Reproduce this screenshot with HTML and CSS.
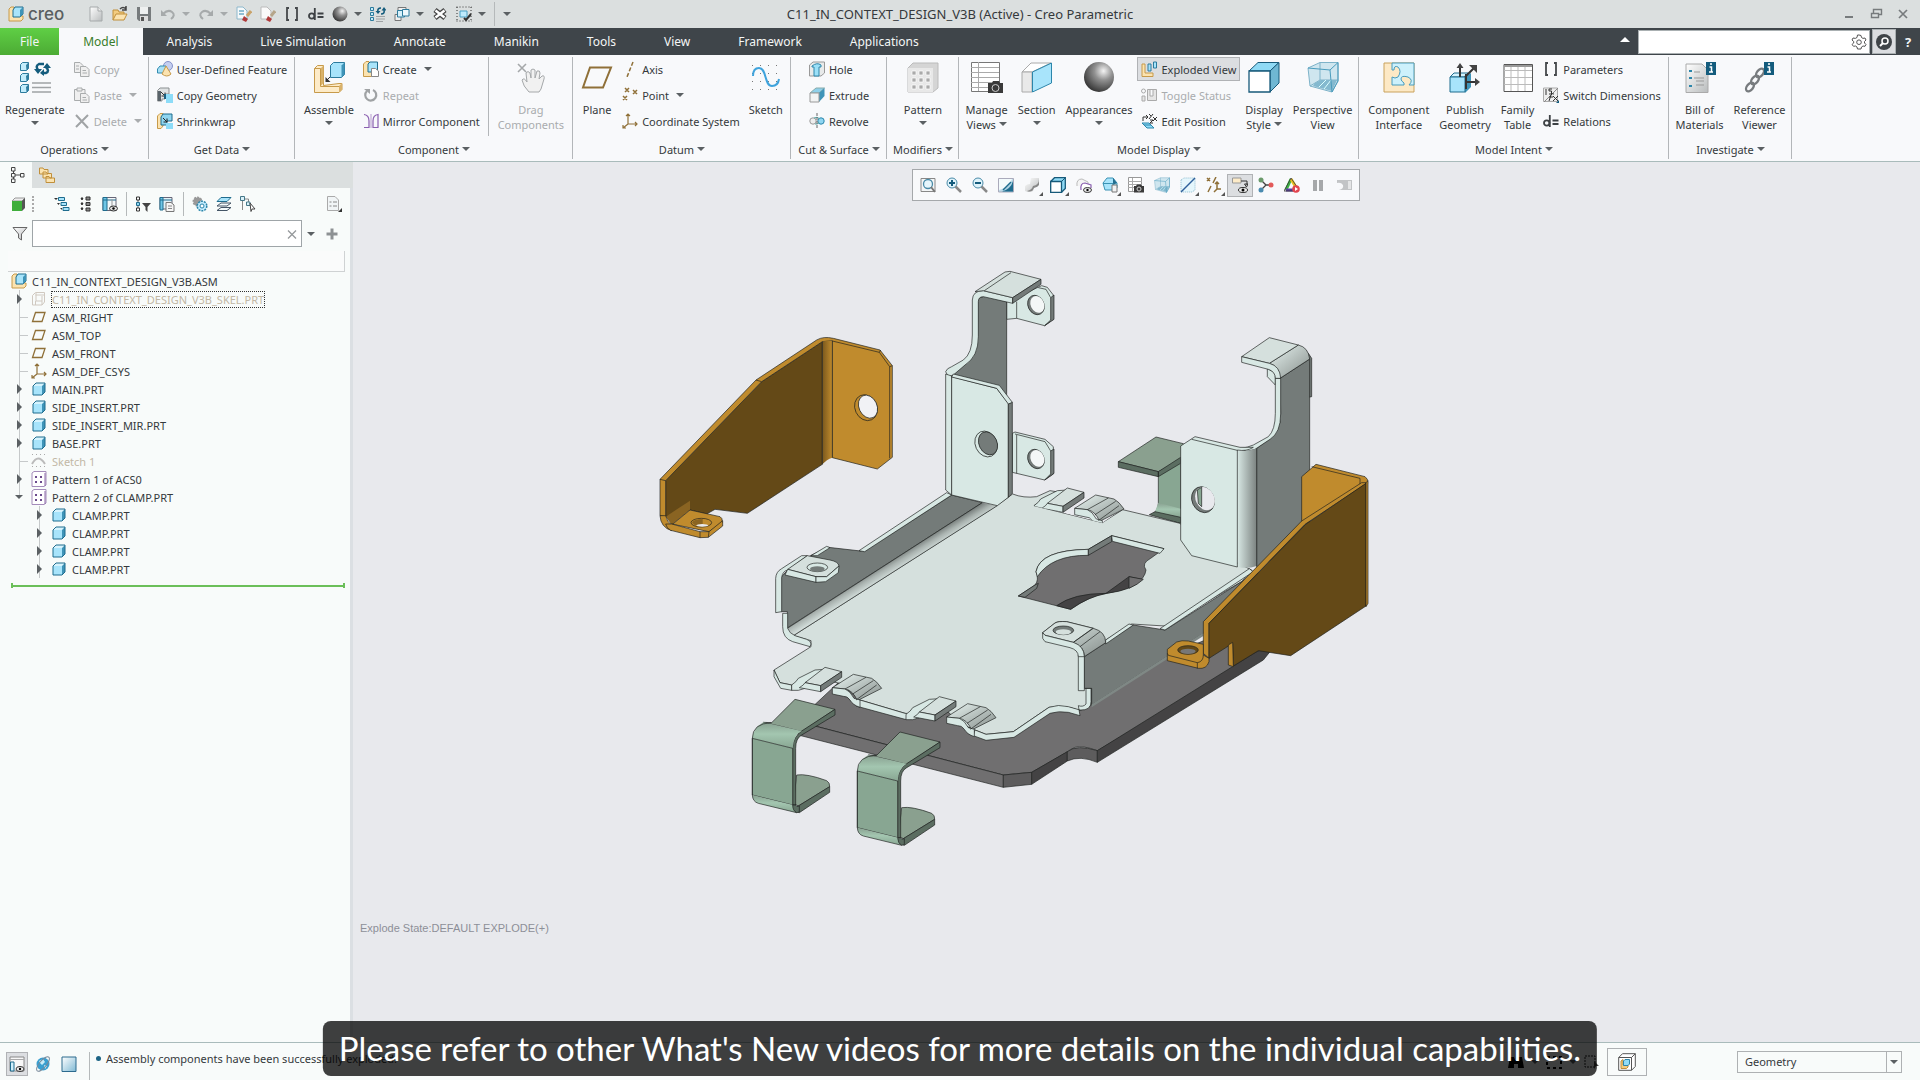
FILE: index.html
```html
<!DOCTYPE html>
<html lang="en">
<head>
<meta charset="utf-8">
<title>C11_IN_CONTEXT_DESIGN_V3B (Active) - Creo Parametric</title>
<link rel="stylesheet" href="styles.css">
</head>
<body>
<svg class="defs" aria-hidden="true">
<defs>
<linearGradient id="gGray" x1="0" y1="0" x2="1" y2="1"><stop offset="0" stop-color="#fff"/><stop offset="1" stop-color="#b9bcbd"/></linearGradient>
<linearGradient id="gBlue" x1="0" y1="0" x2="1" y2="1"><stop offset="0" stop-color="#fff"/><stop offset="1" stop-color="#7fb9d4"/></linearGradient>
<radialGradient id="gBall" cx=".65" cy=".3" r=".75"><stop offset="0" stop-color="#f4f4f4"/><stop offset=".4" stop-color="#929292"/><stop offset="1" stop-color="#333"/></radialGradient>
<symbol id="cube" viewBox="0 0 16 16"><path d="M2 5L5 2H14L11 5Z" fill="#d6f3fd"/><path d="M11 5L14 2V11L11 14Z" fill="#3f94b8"/><path d="M2 5H11V14H2Z" fill="#a8e4fb"/><path d="M2 5L5 2H14V11L11 14H2Z" fill="none" stroke="#1f6c8e"/></symbol>
<symbol id="asm" viewBox="0 0 16 16"><path d="M1 3L3 1H6V10H15V13L13 15H1Z" fill="#fbe3b0" stroke="#c79a4a"/><path d="M5 4L7 1H15V8L12 11H5Z" fill="#a8e4fb" stroke="#1f6c8e"/><path d="M12 4L15 1V8L12 11Z" fill="#3f94b8"/></symbol>
<symbol id="new" viewBox="0 0 16 16"><path d="M2 1H10L14 5V15H2Z" fill="url(#gGray)" stroke="#a5a9aa"/><path d="M10 1V5H14" fill="#eee" stroke="#a5a9aa"/></symbol>
<symbol id="open" viewBox="0 0 16 16"><path d="M1 14V4H6L7 6H12V8" fill="#f3cc80" stroke="#c08f3a"/><path d="M1 14L4 8H15L12 14Z" fill="#fbe3b0" stroke="#c08f3a"/><path d="M8 3Q11 0 14 3M14 0V4H10" fill="none" stroke="#444" stroke-width="1.5"/></symbol>
<symbol id="save" viewBox="0 0 16 16"><path d="M1 1H15V15H3L1 13Z" fill="#777b7d"/><path d="M4 1H12V8H4Z" fill="#eef0f0"/><path d="M4 10H12V15H4Z" fill="#ddd"/><path d="M5 11H8V15H5Z" fill="#555"/></symbol>
<symbol id="undo" viewBox="0 0 16 16"><path d="M3 8Q8 3 12 6T11 13" fill="none" stroke="#a6aaab" stroke-width="2"/><path d="M1 4V10H7Z" fill="#a6aaab"/></symbol>
<symbol id="redo" viewBox="0 0 16 16"><path d="M13 8Q8 3 4 6T5 13" fill="none" stroke="#a6aaab" stroke-width="2"/><path d="M15 4V10H9Z" fill="#a6aaab"/></symbol>
<symbol id="docerase" viewBox="0 0 16 16"><path d="M1 1H7L11 5V13H1Z" fill="#f6f9fa" stroke="#8db8cc"/><path d="M3 5H8M3 8H8" stroke="#2a86ad"/><path d="M15 5L11 10" stroke="#c9a36a" stroke-width="3"/><path d="M8 10L12 13L10 16L6 14Z" fill="#b03a3a"/></symbol>
<symbol id="docclear" viewBox="0 0 16 16"><path d="M1 1H7L11 5V13H1Z" fill="#fafafa" stroke="#bbb"/><path d="M15 5L11 10" stroke="#b5a58a" stroke-width="3"/><path d="M8 10L12 13L10 16L6 14Z" fill="#b03a3a"/></symbol>
<symbol id="params" viewBox="0 0 16 16"><path d="M5 2H3V14H5M11 2H13V14H11" fill="none" stroke="#45494c" stroke-width="1.800"/></symbol>
<symbol id="deq" viewBox="0 0 16 16"><circle cx="3.7" cy="10" r="2.7" fill="none" stroke="#3d4144" stroke-width="1.8"/><path d="M6.8 2V14M9.500 7.500H15.500M9.500 11H15.500" stroke="#3d4144" stroke-width="1.8"/></symbol>
<symbol id="ball" viewBox="0 0 16 16"><circle cx="8" cy="8" r="7.500" fill="url(#gBall)"/></symbol>
<symbol id="regen" viewBox="0 0 32 32"><g fill="#c3ecfb" stroke="#2c7b9d"><path d="M1.500 3.500L3.500 1.500H9.500V7.500L7.500 9.500H1.500ZM1.500 14.500L3.500 12.500H9.500V18.500L7.500 20.500H1.500ZM1.500 25.500L3.500 23.500H9.500V29.500L7.500 31.500H1.500Z"/></g><path d="M7 4L9.500 1.500V7.500L7.500 9.500ZM7 15L9.500 12.500V18.500L7.500 20.500ZM7 26L9.500 23.500V29.500L7.500 31.500Z" fill="#2f7d9e"/><path d="M19 9Q16 5 20 3H25M27 6Q31 10 27 12H23" fill="none" stroke="#145c7d" stroke-width="2.500"/><path d="M15 8H23L19 13ZM24 7H32L28 2ZM21 12L25 8V15Z" fill="#145c7d"/><path d="M13 22H32M13 26.500H32M13 31H32" stroke="#9fa3a5" stroke-width="1.600"/></symbol>
<symbol id="regen16" viewBox="0 0 16 16"><path d="M.5 1.500H3.500V4.500H.5ZM.5 6.500H3.500V9.500H.5ZM.5 11.500H3.500V14.500H.5Z" fill="#c3ecfb" stroke="#2c7b9d"/><path d="M8 6Q7 2 11 2M14 4Q15 8 11 8" fill="none" stroke="#145c7d" stroke-width="1.600"/><path d="M5.500 5H10.500L8 8ZM11.500 4.500H16.500L14 1Z" fill="#145c7d"/><path d="M6 10.500H15M6 13H15M6 15.500H13" stroke="#9fa3a5"/></symbol>
<symbol id="wins" viewBox="0 0 16 16"><path d="M4 1.500H12V7.500H4ZM1 8.500H7V14.500H1Z" fill="#eee" stroke="#777"/><path d="M3.500 4.500H10.500V11H3.500Z" fill="#d6f0fa" stroke="#2c7b9d"/><path d="M8.500 3.500H15V10H8.500Z" fill="#eef8fc" stroke="#2c7b9d"/></symbol>
<symbol id="closex" viewBox="0 0 16 16"><path d="M3 4L13 12M13 4L3 12" stroke="#444" stroke-width="5"/><path d="M3.500 4.500L12.500 11.500M12.500 4.500L3.500 11.500" stroke="#fff" stroke-width="2.500"/></symbol>
<symbol id="selbox" viewBox="0 0 16 16"><path d="M.5 1H16M.5 15H16M1 1V16M15 1V16" stroke="#333" stroke-dasharray="1 2"/><path d="M4 5H11V11H4Z" fill="#bfeafc" stroke="#4aa0c4"/><path d="M8 12L10 14L15 8" fill="none" stroke="#333" stroke-width="2"/></symbol>
<symbol id="copy" viewBox="0 0 16 16"><g fill="#efefef" stroke="#a9acad"><path d="M.5 1.500H6L9 4.500V11.500H.5Z"/><path d="M6.500 5.500H12L15 8.500V15.500H6.500Z"/></g><path d="M2 5H5M2 8H5M8.500 9.500H12M8.500 12H13" stroke="#a9acad"/></symbol>
<symbol id="paste" viewBox="0 0 16 16"><g fill="#efefef" stroke="#a9acad"><path d="M.5 2.500H11V13.500H.5Z"/><path d="M3 1H8V4H3Z"/><path d="M6.500 6.500H12L15 9.500V15.500H6.500Z"/></g><path d="M8.500 10.500H12M8.500 13H13" stroke="#a9acad"/></symbol>
<symbol id="del" viewBox="0 0 16 16"><path d="M2 2L14 15M14 2L2 14" stroke="#a0a3a5" stroke-width="2"/></symbol>
<symbol id="udf" viewBox="0 0 16 16"><circle cx="11" cy="5" r="4.500" fill="#c5cff0" stroke="#8592c8"/><path d="M.5 8L3 5H9L7 12H.5Z" fill="#a9e0f5" stroke="#338cb0"/><path d="M9 5L14 13Q10 17 5 13Z" fill="#fbe3b0" stroke="#c79a4a"/></symbol>
<symbol id="copygeo" viewBox="0 0 16 16"><path d="M.5 3.500L3 1H12V7H8V12H5V14H.5Z" fill="#dfe2e3" stroke="#8b8f91"/><path d="M1 4V14H4V4Z" fill="#59636a"/><path d="M4 5L8 9M8 5.500V9H4.500" stroke="#333" fill="none"/><path d="M9 7H16V16H9Z" fill="#8ddcf8"/><path d="M8 7V12" stroke="#1b5f80" stroke-width="2"/></symbol>
<symbol id="shrink" viewBox="0 0 16 16"><path d="M.5 3L3 .5H6V13L4 15.500H.5Z" fill="#fbe3b0" stroke="#c79a4a"/><path d="M4 4L6 1H15V8H10V12H4Z" fill="#8fd5ef" stroke="#1f6c8e"/><path d="M6 5L10 9M10 5.500V9H6.500" stroke="#222" fill="none"/><path d="M9 10H16V16H9Z" fill="#8ddcf8"/></symbol>
<symbol id="assemble" viewBox="0 0 32 32"><path d="M1.500 7.500L4.500 4.500H10.500V24.500L26 22.500H29V28.500L26 31.500H1.500Z" fill="#fdebc8" stroke="#c79a4a"/><path d="M7.500 7.500L10.500 4.500V22L7.500 25ZM26 25L29 22V28.500L26 31.500Z" fill="#d9b26a"/><path d="M7.500 25.500H26M1.500 7.500H7.500V25.500" stroke="#c79a4a" fill="none"/><path d="M17.500 4.500L20.500 1.500H31.500V13.500L28.500 16.500H17.500Z" fill="#a8e4fb" stroke="#2c7b9d"/><path d="M28.500 4.500L31.500 1.500V13.500L28.500 16.500Z" fill="#3f94b8"/><path d="M17 16L13 20" stroke="#333"/><path d="M12.500 16V21H17.500Z" fill="#333"/></symbol>
<symbol id="create" viewBox="0 0 16 16"><path d="M.5 3L3 .5H6V10H12V15.500H.5Z" fill="#fbe3b0" stroke="#c79a4a"/><path d="M5 3L7 1H14.500V9L12 11H5Z" fill="#a8e4fb" stroke="#1f6c8e"/><path d="M8.500 7.500H12.500L15.500 10V15.500H8.500Z" fill="#fff" stroke="#888"/></symbol>
<symbol id="repeat" viewBox="0 0 16 16"><path d="M10 3A5.500 5.500 0 1 1 4 4" fill="none" stroke="#9fa2a4" stroke-width="2.200"/><path d="M1 2H7V7Z" fill="#9fa2a4"/></symbol>
<symbol id="mirror" viewBox="0 0 16 16"><path d="M1 1.500Q6 2 6 8V14.500H1M15 1.500Q10 2 10 8V14.500H15Z" fill="none" stroke="#8a5fb0" stroke-width="1.200"/><path d="M8 1V15" stroke="#8a5fb0" stroke-width=".6"/></symbol>
<symbol id="hand" viewBox="0 0 32 32"><path d="M3 3L11 11M11 3L3 11" stroke="#a5a8aa" stroke-width="1.600"/><path d="M14 31Q8 25 7 19Q9 16 12 21L11 12Q13 9 15 12L16 17V9Q18 7 20 9V17L22 10Q25 9 25 12L24 18L27 15Q30 14 29 18L26 28L24 31Z" fill="#f1f1f1" stroke="#a5a8aa"/></symbol>
<symbol id="plane" viewBox="0 0 32 32"><path d="M9 6.500H30L22 26.500H2Z" fill="none" stroke="#8f7038" stroke-width="2"/></symbol>
<symbol id="plane16" viewBox="0 0 16 16"><path d="M4.500 3.500H14L11 12.500H1.500Z" fill="none" stroke="#8f7038" stroke-width="1.300"/></symbol>
<symbol id="axis" viewBox="0 0 16 16"><path d="M11 1L5 16" stroke="#8f7038" stroke-width="1.500" stroke-dasharray="4 2"/></symbol>
<symbol id="point" viewBox="0 0 16 16"><path d="M3 1L7 5M7 1L3 5M11 3L15 7M15 3L11 7M1 9L5 13M5 9L1 13" stroke="#8f7038" stroke-width="1.500"/></symbol>
<symbol id="csys" viewBox="0 0 16 16"><path d="M6 1V11H15M6 11L1 15M4 3L6 1L8 3M13 9L15 11L13 13M1 12V15H4" fill="none" stroke="#8f7038" stroke-width="1.200"/></symbol>
<symbol id="sketch" viewBox="0 0 32 32"><path d="M2 4.500H30M2 12.500H30M2 20.500H30M2 28.500H30" stroke="#777" stroke-dasharray="1 7"/><path d="M3 15Q3 7 9 7C17 7 14 25 22 25Q28 25 29 18" fill="none" stroke="#3fa3dc" stroke-width="2"/></symbol>
<symbol id="hole" viewBox="0 0 16 16"><path d="M.5 4L4 1H15.500V12L12 15H.5Z" fill="#e8eaea" stroke="#999"/><path d="M3 5Q8 1 12 4V6H10V15H5V6H3Z" fill="#9be0f8" stroke="#2c86ab"/></symbol>
<symbol id="extrude" viewBox="0 0 16 16"><path d="M1 6L7 1H15.500L10 6Z" fill="#8fd0ea" stroke="#8aa"/><path d="M10 6L15.500 1V9L10 15Z" fill="#3f94b8"/><path d="M1 6H10V15H1Z" fill="#f2f3f3" stroke="#999"/></symbol>
<symbol id="revolve" viewBox="0 0 16 16"><circle cx="4" cy="8" r="3.200" fill="#eee" stroke="#999"/><circle cx="12" cy="8" r="3.200" fill="#8fd6f2" stroke="#2c86ab"/><path d="M5 5Q8 3 11 6M6 11Q9 12 10 9" fill="none" stroke="#5aa"/><path d="M8 0V16" stroke="#666" stroke-dasharray="3 1"/></symbol>
<symbol id="pattern" viewBox="0 0 32 32"><path d="M1 7L6 2H31V27L26 31H1Z" fill="#d5d5d5" stroke="#bbb"/><path d="M1 7H26V31H1Z" fill="#e8e8e8"/><path d="M5 10H9V14H5ZM12 10H16V14H12ZM19 10H23V14H19ZM5 17H9V21H5ZM12 17H16V21H12ZM19 17H23V21H19ZM5 24H9V28H5ZM12 24H16V28H12ZM19 24H23V28H19Z" fill="#aaa" stroke="#fff" stroke-width=".7"/></symbol>
<symbol id="manage" viewBox="0 0 32 32"><path d="M.5 1.500H28.500V30.500H.5Z" fill="#fff" stroke="#777"/><path d="M7.500 1V30M0 6.500H28M0 11.500H28M0 16.500H28M0 21.500H28M0 26.500H20" stroke="#aaa"/><path d="M17 22H21L22 20H28L29 22H32V32H17Z" fill="#3a3a3a"/><circle cx="24.500" cy="27" r="3.500" fill="#3a3a3a" stroke="#ccc"/></symbol>
<symbol id="manage16" viewBox="0 0 16 16"><path d="M.5 .5H13.500V14.500H.5Z" fill="#fff" stroke="#999"/><path d="M4.500 1V14M0 4.500H14M0 7.500H14M0 10.500H14" stroke="#aaa"/><path d="M6 9H8L9 7.500H13L14 9H16V15.500H6Z" fill="#3a3a3a"/><circle cx="11" cy="12" r="2" fill="#3a3a3a" stroke="#ccc"/></symbol>
<symbol id="section" viewBox="0 0 32 32"><path d="M1 11L10 2H30L11 11Z" fill="#fff" stroke="#aaa"/><path d="M1 11H11V31H1Z" fill="#e9e9e9" stroke="#aaa"/><path d="M11.500 11L30.500 2V22L11.500 31Z" fill="#a8e4fb" stroke="#2c86ab"/></symbol>
<symbol id="exploded" viewBox="0 0 16 16"><path d="M1 3H4V12H12V15.500H1Z" fill="#fbe3b0" stroke="#c79a4a"/><path d="M7 3H10V10H7ZM12.500 1H15.500V7H12.500Z" fill="#a8e4fb" stroke="#2c7b9d"/></symbol>
<symbol id="toggle" viewBox="0 0 16 16"><circle cx="2.500" cy="4" r="2" fill="none" stroke="#aaa"/><path d="M1 9H4V14H1ZM6.500 2.500H15.500V13.500H6.500ZM9 3V9H12V3" fill="#e5e5e5" stroke="#aaa"/></symbol>
<symbol id="editpos" viewBox="0 0 16 16"><path d="M2 8V4H6M5 2L7 4L5 6M8 1L10 3M12 1L8 6M12 4L16 8M16 4L12 8M9 7H12L9 10H12" stroke="#333" fill="none"/><path d="M1 10H8L13 15H6Z" fill="#8fdcf8" stroke="#2c86ab"/><path d="M3 12H10" stroke="#2c86ab"/></symbol>
<symbol id="dstyle" viewBox="0 0 32 32"><path d="M1 10L10 1.500H31L22 10Z" fill="#8fdaf5" stroke="#175a7a"/><path d="M22 10L31 1.500V22L22 31Z" fill="#6fb7d3" stroke="#175a7a"/><path d="M1 10H22V31H1Z" fill="#fff" stroke="#175a7a" stroke-width="1.300"/></symbol>
<symbol id="dstyle16" viewBox="0 0 16 16"><path d="M.7 4.500L4.500 .7H15.300V11.500L11.500 15.300H.7Z" fill="#8fdaf5" stroke="#175a7a" stroke-width="1.300"/><path d="M.7 4.500H11.500V15.300H.7Z" fill="#fff" stroke="#175a7a" stroke-width="1.300"/><path d="M11.500 4.500L15.300 .7" stroke="#175a7a"/></symbol>
<symbol id="persp" viewBox="0 0 32 32"><path d="M1 7L13 1.500H31V20L25 31L3 25Z" fill="#cfe6ef" stroke="#7eb3c9"/><path d="M13 1.500V19L3 25M13 19H31" fill="none" stroke="#7eb3c9"/><path d="M8 22L14 19H30L25 30L6 25Z" fill="#84b9cf"/><path d="M12 26L19 19M17 28L24 19" stroke="#dff"/><path d="M1 7L23 9L25 31M23 9L31 1.500V20L25 31" fill="none" stroke="#4a9cbd"/></symbol>
<symbol id="puzzle" viewBox="0 0 32 32"><path d="M1 2H31V31H1Z" fill="#fde9c5" stroke="#c9a25c"/><path d="M9 2H31V24H26Q31 19 25 16Q18 14 18 18Q18 20 21 22V24H9V16Q12 18 15 16Q19 10 15 6Q11 4 11 9L9 9Z" fill="#cdf1fc" stroke="#4a9cbd"/></symbol>
<symbol id="publish" viewBox="0 0 32 32"><path d="M1 16L5 12H19L16 16Z" fill="#d6f3fd" stroke="#1f6c8e"/><path d="M16 16L22 12V26L16 32Z" fill="#3f94b8"/><path d="M1 16H16V31H1Z" fill="#a8e4fb" stroke="#1f6c8e"/><path d="M11 16V4M16 16L25 7M16 21H29M17 13V28" stroke="#333" stroke-width="2"/><path d="M7.500 7L11 2L14.500 7ZM20 4H28V12ZM26 17L31 21L26 25Z" fill="#444"/></symbol>
<symbol id="ftable" viewBox="0 0 32 32"><path d="M2 3.500H30.500V30.500H2Z" fill="#fff" stroke="#555"/><path d="M2 5H30" stroke="#999" stroke-width="2"/><path d="M2 9.500H30M9 6V30M16 6V30M23 6V30M2 16.500H30M2 23.500H30" stroke="#bbb"/></symbol>
<symbol id="switchd" viewBox="0 0 16 16"><path d="M.5 1H14.500V14.500H.5Z" fill="#eee" stroke="#aaa"/><path d="M1 15L15 1" stroke="#888"/><path d="M3 2V8M9 2H6V4H8.500V7H6M6 14L8 8Q9 6 11 7M6 10H10M10 9L15 14M15 9L10 14" fill="none" stroke="#333"/><path d="M13 16H16V13Z" fill="#145c7d"/></symbol>
<symbol id="bom" viewBox="0 0 32 32"><path d="M2 3H18L24 9V31.500H2Z" fill="url(#gGray)" stroke="#aaa"/><path d="M10 11H16M10 17H20M12 20H20M12 24H20" stroke="#999"/><path d="M5 9H8V11H5ZM5 16H8V18H5ZM5 24H8V26H5Z" fill="#2c86ab"/><path d="M22 1H32V14H22Z" fill="#145c7d"/><path d="M25.500 6H27.500V11H29M25 11H29M26 3H28" stroke="#fff" stroke-width="1.500" fill="none"/></symbol>
<symbol id="refv" viewBox="0 0 32 32"><g fill="none" stroke="#777b7e" stroke-width="2.400"><ellipse cx="7" cy="26" rx="5" ry="3" transform="rotate(-50 7 26)"/><ellipse cx="12" cy="19" rx="5" ry="3" transform="rotate(-50 12 19)"/><ellipse cx="17" cy="12" rx="5" ry="3" transform="rotate(-50 17 12)"/></g><path d="M21 1H31V14H21Z" fill="#145c7d"/><path d="M24.500 6H26.500V11H28M24 11H28M25 3H27" stroke="#fff" stroke-width="1.500" fill="none"/></symbol>
<symbol id="tree" viewBox="0 0 16 16"><path d="M3.500 2V14M3.500 8H12" stroke="#444"/><path d="M1.500 .5H5V4H1.500ZM1.500 6.500H5V10H1.500ZM1.500 12H5V15.500H1.500ZM10.500 6.500H14V10H10.500Z" fill="#f8fbfa" stroke="#444"/></symbol>
<symbol id="folders" viewBox="0 0 16 16"><path d="M.5 1H4L5 2.500H9V7H.5ZM4 5H7L8 6.500H12.500V11H4ZM7 9.500H10L11 11H15.500V15.500H7Z" fill="#fbe3b0" stroke="#c08f3a"/></symbol>
<symbol id="greencube" viewBox="0 0 16 16"><path d="M2 5L5 2H15L12 5Z" fill="#eee" stroke="#999"/><path d="M12 5L15 2V12L12 15Z" fill="#555"/><path d="M2 5H12V15H2Z" fill="#3fae3b"/></symbol>
<symbol id="t1" viewBox="0 0 16 16"><path d="M0 2H4L2 4ZM3 7H6L4.500 9ZM6 12H8V14Z" fill="#333"/><path d="M4.500 1.500H10.500V4.500H4.500ZM7 6.500H12.500V9.500H7ZM9 11.500H15V14.500H9Z" fill="#a8e4fb" stroke="#1f6c8e"/></symbol>
<symbol id="t2" viewBox="0 0 16 16"><path d="M3 2H5L4 4ZM3 7H5L4 9ZM3 12H5L4 14Z" stroke="#333"/><path d="M8 1H12V4H8ZM8 6.500H12V9.500H8ZM8 12H12V15H8Z" fill="#888" stroke="#333"/></symbol>
<symbol id="t3" viewBox="0 0 16 16"><path d="M1 1.500H14V14.500H1Z" fill="#f4f8fa" stroke="#667"/><path d="M1 1.500H5V14.500H1Z" fill="#6fc6e6" stroke="#1f6c8e"/><path d="M1 4H14" stroke="#1f6c8e"/><path d="M10 3V14" stroke="#999"/><ellipse cx="11.500" cy="12.500" rx="4" ry="2.500" fill="#ddd" stroke="#333"/><circle cx="11.500" cy="12.500" r="1.200"/></symbol>
<symbol id="t4" viewBox="0 0 16 16"><path d="M3 1V15" stroke="#666"/><path d="M1.500 1H4.500V4H1.500ZM1.500 12H4.500V15H1.500Z" fill="#fff" stroke="#333"/><path d="M1.500 6.500H4.500V9.500H1.500Z" fill="#8fd5ef" stroke="#1f6c8e"/><path d="M7 7H16L12.500 11V16L10.500 14V11Z" fill="#444"/></symbol>
<symbol id="t5" viewBox="0 0 16 16"><path d="M1 1.500H13V13H1Z" fill="#e4f2f8" stroke="#667"/><path d="M1 1.500H4V14H1Z" fill="#6fc6e6" stroke="#1f6c8e"/><path d="M1 4H13" stroke="#1f6c8e"/><path d="M7 6.500H12L15 9V15.500H7Z" fill="#f6f6f6" stroke="#777"/><path d="M9 10H13M9 12.500H13" stroke="#888"/></symbol>
<symbol id="gears" viewBox="0 0 16 16"><circle cx="5.500" cy="5.500" r="4" fill="#999" stroke="#999" stroke-width="2" stroke-dasharray="2 1"/><circle cx="10" cy="10" r="4.800" fill="#bfeafc" stroke="#2c86ab" stroke-width="1.500" stroke-dasharray="2 1"/><circle cx="10" cy="10" r="2" fill="#fff" stroke="#2c86ab"/></symbol>
<symbol id="layers" viewBox="0 0 16 16"><path d="M1 14.500L5 11.500H15L11 14.500ZM1 10L5 7H15L11 10Z" fill="#f4fbfd" stroke="#456"/><path d="M1 5.500L5 1.500H15L11 5.500Z" fill="#a8e4fb" stroke="#1f6c8e"/></symbol>
<symbol id="t8" viewBox="0 0 16 16"><path d="M2.500 5V14M4 3H8.500V6" stroke="#888" fill="none"/><path d="M.5 .5H4.500V4.500H.5ZM6.500 6H10V9.500H6.500Z" fill="#d8f0f8" stroke="#478"/><path d="M10 7L15 13L12 13L11 15.500Z" fill="#fff" stroke="#444"/></symbol>
<symbol id="setdoc" viewBox="0 0 16 16"><path d="M1.500 .5H9L12.500 4V14.500H1.500Z" fill="#f1f5f6" stroke="#aaa"/><path d="M3.500 6H5.500M7 6H11M3.500 10H5.500M7 10H11" stroke="#888"/><path d="M12 16H16V12Z" fill="#333"/></symbol>
<symbol id="funnel" viewBox="0 0 16 16"><path d="M1 1.500H15L9.500 8V14L6.500 12V8Z" fill="url(#gGray)" stroke="#666"/></symbol>
<symbol id="plus" viewBox="0 0 16 16"><path d="M8 2.500V13.500M2.500 8H13.500" stroke="#8d9193" stroke-width="3"/></symbol>
<symbol id="skel" viewBox="0 0 16 16"><path d="M1.500 4.500L4.500 1.500H13.500V11L11 14H1.500ZM4.500 4H13M5 2V10H11M11 5V14M4.500 10V14" fill="none" stroke="#d0c9c0"/></symbol>
<symbol id="sk1" viewBox="0 0 16 16"><path d="M1 1.500H15M1 13.500H15" stroke="#aaa" stroke-dasharray="1 3"/><path d="M1 11Q7 0 14 11" fill="none" stroke="#bbb" stroke-width="2"/></symbol>
<symbol id="patt16" viewBox="0 0 16 16"><path d="M1 2L3 .5H15V14L13 15.500H1Z" fill="#fff" stroke="#a48cba"/><path d="M14 2V15" stroke="#8c6aa8"/><path d="M4 5H6V7H4ZM9 5H11V7H9ZM4 10H6V12H4ZM9 10H11V12H9Z" fill="#6b4a8c"/></symbol>
<symbol id="zfit" viewBox="0 0 16 16"><path d="M1 1.500H15V14.500H1Z" fill="#f4f6f7" stroke="#888"/><circle cx="8" cy="7" r="4.500" fill="#e6f6fc" stroke="#4a8ba8" stroke-width="1.300"/><path d="M11 10L15 15" stroke="#777" stroke-width="2"/></symbol>
<symbol id="zin" viewBox="0 0 16 16"><circle cx="6" cy="6" r="5" fill="#dff3fb" stroke="#4a8ba8"/><path d="M6 3V9M3 6H9" stroke="#145c7d" stroke-width="2"/><path d="M9.500 9.500L15 15" stroke="#888" stroke-width="2.500"/></symbol>
<symbol id="zout" viewBox="0 0 16 16"><circle cx="6" cy="6" r="5" fill="#dff3fb" stroke="#4a8ba8"/><path d="M3 6H9" stroke="#145c7d" stroke-width="2"/><path d="M9.500 9.500L15 15" stroke="#888" stroke-width="2.500"/></symbol>
<symbol id="repaint" viewBox="0 0 16 16"><path d="M.5 1.500H15.500V15H.5Z" fill="url(#gBlue)" stroke="#aab"/><path d="M4 14.500Q13 12 15 4V14.500Z" fill="#1f6c8e"/><path d="M1 2H14Q12 10 1 13Z" fill="#f3fafc"/><path d="M5 13L13 5" stroke="#1f6c8e" stroke-width="1.500"/></symbol>
<symbol id="render" viewBox="0 0 16 16"><path d="M7 1H15V7Q14 9 10 10L9 14Q5 16 1 14V9Q3 7 6 7Z" fill="url(#gGray)"/><path d="M9 9Q15 8 15 2V8Q14 10 10 11Q8 16 3 14Q8 13 9 9Z" fill="#888"/></symbol>
<symbol id="hidden" viewBox="0 0 16 16"><path d="M1 9Q0 2 6 2L12 5V9" fill="#f4f4f4" stroke="#bbb"/><path d="M5 13Q4 6 9 6L15 8V11" fill="#fff" stroke="#8a5fb0" stroke-width="1.200"/><ellipse cx="11.500" cy="13" rx="4" ry="2.500" fill="#eee" stroke="#333"/><circle cx="11.500" cy="13" r="1.200"/></symbol>
<symbol id="named" viewBox="0 0 16 16"><path d="M1 6L5 1H11L15 6V11L11 13H3Z" fill="#a8e4fb" stroke="#3a92b4"/><path d="M11 1L15 6L11 8Z" fill="#236f90"/><path d="M1 6.500H11V13" stroke="#3a92b4" fill="none"/><path d="M10 8H15V15H10Z" fill="#f2f2f2" stroke="#777"/></symbol>
<symbol id="nodisp" viewBox="0 0 16 16"><path d="M1 3L4 1H15V13L12 15H1Z" fill="#e5f6fc" stroke="#8fbdd0" stroke-dasharray="1 1"/><path d="M1 15L15 1" stroke="#2f5f9a" stroke-width="1.500"/></symbol>
<symbol id="datums" viewBox="0 0 16 16"><path d="M1 1L4 4M4 1L1 4M10 0L7 6M5 9L2 15M11 5V12H15M11 12L8 15M9 7L11 5L13 7" fill="none" stroke="#8f7038" stroke-width="1.500"/></symbol>
<symbol id="annot" viewBox="0 0 16 16"><path d="M.5 1H9V6H.5Z" fill="#fdebc8" stroke="#999"/><path d="M9 4H15V8M12.500 7H16L14.500 10Z" stroke="#333" fill="none"/><ellipse cx="11" cy="13" rx="4.500" ry="2.500" fill="#eee" stroke="#333"/><circle cx="11" cy="13" r="1.500"/></symbol>
<symbol id="spin" viewBox="0 0 16 16"><path d="M3 3L8 8H13M8 8L3 13" stroke="#444" stroke-width="1.300" fill="none"/><circle cx="3" cy="3" r="2.500" fill="#6b9a6b"/><circle cx="13" cy="8" r="2.500" fill="#e35a5a"/><circle cx="3" cy="13" r="2.500" fill="#4a8bb0"/></symbol>
<symbol id="sim" viewBox="0 0 16 16"><path d="M7 2L2 13" stroke="#3cb043" stroke-width="3"/><path d="M7 2L13 12" stroke="#e8c020" stroke-width="3"/><path d="M2 13H11" stroke="#5a3fa0" stroke-width="3"/><path d="M7 1L0 14H9M7 1L13 10" stroke="#333" stroke-width=".8" fill="none"/><circle cx="12" cy="12" r="3.800" fill="#e2454f"/><path d="M11 10L14 12L11 14Z" fill="#fff"/></symbol>
<symbol id="pause" viewBox="0 0 16 16"><path d="M3 3H7V14H3ZM9 3H13V14H9Z" fill="#a6a8aa"/></symbol>
<symbol id="resume" viewBox="0 0 16 16"><path d="M1 3H16V13H3Q8 12 7 8Q5 5 1 6Z" fill="#c2c4c6"/><path d="M12 4H15V12H12Z" fill="#e4e5e6"/></symbol>
<symbol id="geo" viewBox="0 0 18 18"><path d="M.7 4.500L4.500 .7H17.300V13.500L13.500 17.300H.7ZM.7 4.500H13.500V17.300M13.500 4.500L17.300 .7" fill="#fff" stroke="#555"/><path d="M3 8L5 6.500V12H10V14L8.500 15.500H3Z" fill="#f3cc80" stroke="#c08f3a"/><path d="M5.500 8L7 6.500H11.500V11L10 12.500H5.500Z" fill="#8fdcf8" stroke="#2c86ab"/></symbol>
<symbol id="navtree" viewBox="0 0 16 16"><path d="M1 1H15V15H1Z" fill="#f8f8f8" stroke="#888"/><path d="M1 3.500H15" stroke="#aaa"/><path d="M1.500 6H5V15H1.500Z" fill="#cfeefa" stroke="#1f6c8e"/><ellipse cx="11" cy="13" rx="4" ry="2.500" fill="#eee" stroke="#333"/><circle cx="11" cy="13" r="1.200"/></symbol>
<symbol id="globe" viewBox="0 0 16 16"><circle cx="8" cy="8" r="6.500" fill="#3a9fd0"/><path d="M4 5L8 3L10 6L7 9L5 7ZM9 9L12 10L10 13Z" fill="#c8ecf8"/><ellipse cx="8" cy="8" rx="9" ry="3.500" fill="none" stroke="#789" transform="rotate(-50 8 8)"/></symbol>
<symbol id="sheet" viewBox="0 0 16 16"><path d="M1 1H15V15.500H1Z" fill="url(#gBlue)" stroke="#2c6a8e"/></symbol>
<symbol id="bino" viewBox="0 0 16 16"><path d="M2 3H6L7 6H9L10 3H14L16 14H10V10H6V14H0Z" fill="#000"/></symbol>
<symbol id="dashsel" viewBox="0 0 16 16"><path d="M1 3H15V14H1Z" fill="none" stroke="#000" stroke-width="2" stroke-dasharray="3 3"/></symbol>
<symbol id="picksel" viewBox="0 0 16 16"><path d="M1 2H11V13H1Z" fill="none" stroke="#222" stroke-dasharray="2 1"/><path d="M10 7L15 12L12 12L10 15Z" fill="#444"/></symbol>
<symbol id="gear" viewBox="0 0 16 16"><path d="M8 1L10 1.500L10.500 3.500L12 4.400L14 4L15 6L13.500 7.500V9L15 10.500L14 12.300L12 12L10.500 13L10 15H6.500L6 13L4.500 12L2.500 12.300L1 10.500L2.700 9V7.500L1 6L2 4L4.300 4.400L6 3.500L6.500 1Z" fill="#fff" stroke="#555"/><circle cx="8" cy="8.200" r="2.300" fill="none" stroke="#555"/></symbol>
<symbol id="mag" viewBox="0 0 16 16"><circle cx="8" cy="8" r="8" fill="#3f4448"/><circle cx="9" cy="7" r="3" fill="none" stroke="#fff" stroke-width="1.500"/><path d="M7 9L4 12" stroke="#fff" stroke-width="2"/></symbol>
<symbol id="min" viewBox="0 0 16 16"><path d="M4 11H12" stroke="#777b7d" stroke-width="2"/></symbol>
<symbol id="rest" viewBox="0 0 16 16"><path d="M5.500 7V3.500H13.500V8.500H11M3.500 7.500H10.500V11.500H3.500Z" fill="none" stroke="#777b7d" stroke-width="1.400"/></symbol>
<symbol id="x" viewBox="0 0 16 16"><path d="M4 4L12 12M12 4L4 12" stroke="#777b7d" stroke-width="1.700"/></symbol>
<symbol id="xthin" viewBox="0 0 16 16"><path d="M4 4.500L12 12.500M12 4.500L4 12.500" stroke="#95999b" stroke-width="1.300"/></symbol>
</defs>
</svg>

<div class="app">
<header class="titlebar">
  <div class="brand"><svg class="i"><use href="#asm"/></svg><span>creo</span></div>
  <nav class="quick" aria-label="Quick access">
    <button aria-label="New"><svg class="i"><use href="#new"/></svg></button>
    <button aria-label="Open"><svg class="i"><use href="#open"/></svg></button>
    <button aria-label="Save"><svg class="i"><use href="#save"/></svg></button>
    <button class="dd off" aria-label="Undo"><svg class="i"><use href="#undo"/></svg></button>
    <button class="dd off" aria-label="Redo"><svg class="i"><use href="#redo"/></svg></button>
    <button aria-label="Erase display"><svg class="i"><use href="#docerase"/></svg></button>
    <button aria-label="Clear"><svg class="i"><use href="#docclear"/></svg></button>
    <button aria-label="Parameters"><svg class="i"><use href="#params"/></svg></button>
    <button aria-label="Relations"><svg class="i"><use href="#deq"/></svg></button>
    <button class="dd" aria-label="Appearance"><svg class="i"><use href="#ball"/></svg></button>
    <button aria-label="Regenerate"><svg class="i"><use href="#regen16"/></svg></button>
    <button class="dd" aria-label="Windows"><svg class="i"><use href="#wins"/></svg></button>
    <button aria-label="Close window"><svg class="i"><use href="#closex"/></svg></button>
    <button class="dd" aria-label="Select"><svg class="i"><use href="#selbox"/></svg></button>
    <button class="more" aria-label="Customize"></button>
  </nav>
  <h1>C11_IN_CONTEXT_DESIGN_V3B (Active) - Creo Parametric</h1>
  <div class="winbtns">
    <button aria-label="Minimize"><svg class="i"><use href="#min"/></svg></button>
    <button aria-label="Restore"><svg class="i"><use href="#rest"/></svg></button>
    <button aria-label="Close"><svg class="i"><use href="#x"/></svg></button>
  </div>
</header>

<nav class="tabs">
  <button class="file">File</button><button class="on">Model</button><button>Analysis</button><button>Live Simulation</button><button>Annotate</button><button>Manikin</button><button>Tools</button><button>View</button><button>Framework</button><button>Applications</button>
  <div class="find">
    <button class="fold" aria-label="Minimize ribbon"></button>
    <div class="findbox"><input type="text" aria-label="Search commands"><svg class="i"><use href="#gear"/></svg></div>
    <button class="go" aria-label="Search"><svg class="i"><use href="#mag"/></svg></button>
    <button class="help" aria-label="Help">?</button>
  </div>
</nav>

<div class="ribbon">
  <section class="group w-ops"><div class="tools">
    <button class="big"><svg><use href="#regen"/></svg><span>Regenerate</span><i class="ar"></i></button>
    <div class="col">
      <button class="sm off"><svg class="i"><use href="#copy"/></svg>Copy</button>
      <button class="sm off"><svg class="i"><use href="#paste"/></svg>Paste<i class="ar"></i></button>
      <button class="sm off"><svg class="i"><use href="#del"/></svg>Delete<i class="ar"></i></button>
    </div></div><button class="cap">Operations<i class="ar"></i></button></section>
  <section class="group w-get"><div class="tools">
    <div class="col">
      <button class="sm"><svg class="i"><use href="#udf"/></svg>User-Defined Feature</button>
      <button class="sm"><svg class="i"><use href="#copygeo"/></svg>Copy Geometry</button>
      <button class="sm"><svg class="i"><use href="#shrink"/></svg>Shrinkwrap</button>
    </div></div><button class="cap">Get Data<i class="ar"></i></button></section>
  <section class="group w-comp"><div class="tools">
    <button class="big"><svg><use href="#assemble"/></svg><span>Assemble</span><i class="ar"></i></button>
    <div class="col">
      <button class="sm"><svg class="i"><use href="#create"/></svg>Create<i class="ar"></i></button>
      <button class="sm off"><svg class="i"><use href="#repeat"/></svg>Repeat</button>
      <button class="sm"><svg class="i"><use href="#mirror"/></svg>Mirror Component</button>
    </div>
    <div class="vsep"></div>
    <button class="big off"><svg><use href="#hand"/></svg><span>Drag<br>Components</span></button>
    </div><button class="cap">Component<i class="ar"></i></button></section>
  <section class="group w-datum"><div class="tools">
    <button class="big"><svg><use href="#plane"/></svg><span>Plane</span></button>
    <div class="col">
      <button class="sm"><svg class="i"><use href="#axis"/></svg>Axis</button>
      <button class="sm"><svg class="i"><use href="#point"/></svg>Point<i class="ar"></i></button>
      <button class="sm"><svg class="i"><use href="#csys"/></svg>Coordinate System</button>
    </div>
    <button class="big"><svg><use href="#sketch"/></svg><span>Sketch</span></button>
    </div><button class="cap">Datum<i class="ar"></i></button></section>
  <section class="group w-cut"><div class="tools">
    <div class="col">
      <button class="sm"><svg class="i"><use href="#hole"/></svg>Hole</button>
      <button class="sm"><svg class="i"><use href="#extrude"/></svg>Extrude</button>
      <button class="sm"><svg class="i"><use href="#revolve"/></svg>Revolve</button>
    </div></div><button class="cap">Cut &amp; Surface<i class="ar"></i></button></section>
  <section class="group w-mod"><div class="tools">
    <button class="big"><svg><use href="#pattern"/></svg><span>Pattern</span><i class="ar"></i></button>
    </div><button class="cap">Modifiers<i class="ar"></i></button></section>
  <section class="group w-disp"><div class="tools">
    <button class="big"><svg><use href="#manage"/></svg><span>Manage<br>Views<i class="ar in"></i></span></button>
    <button class="big"><svg><use href="#section"/></svg><span>Section</span><i class="ar"></i></button>
    <button class="big"><svg><use href="#ball"/></svg><span>Appearances</span><i class="ar"></i></button>
    <div class="col">
      <button class="sm pressed"><svg class="i"><use href="#exploded"/></svg>Exploded View</button>
      <button class="sm off"><svg class="i"><use href="#toggle"/></svg>Toggle Status</button>
      <button class="sm"><svg class="i"><use href="#editpos"/></svg>Edit Position</button>
    </div>
    <button class="big"><svg><use href="#dstyle"/></svg><span>Display<br>Style<i class="ar in"></i></span></button>
    <button class="big"><svg><use href="#persp"/></svg><span>Perspective<br>View</span></button>
    </div><button class="cap">Model Display<i class="ar"></i></button></section>
  <section class="group w-int"><div class="tools">
    <button class="big"><svg><use href="#puzzle"/></svg><span>Component<br>Interface</span></button>
    <button class="big"><svg><use href="#publish"/></svg><span>Publish<br>Geometry</span></button>
    <button class="big"><svg><use href="#ftable"/></svg><span>Family<br>Table</span></button>
    <div class="col">
      <button class="sm"><svg class="i"><use href="#params"/></svg>Parameters</button>
      <button class="sm"><svg class="i"><use href="#switchd"/></svg>Switch Dimensions</button>
      <button class="sm"><svg class="i"><use href="#deq"/></svg>Relations</button>
    </div></div><button class="cap">Model Intent<i class="ar"></i></button></section>
  <section class="group w-inv"><div class="tools">
    <button class="big"><svg><use href="#bom"/></svg><span>Bill of<br>Materials</span></button>
    <button class="big"><svg><use href="#refv"/></svg><span>Reference<br>Viewer</span></button>
    </div><button class="cap">Investigate<i class="ar"></i></button></section>
</div>

<main class="work">
<aside class="side">
  <div class="sidetabs"><button class="on" aria-label="Model tree"><svg class="i"><use href="#tree"/></svg></button><button aria-label="Folders"><svg class="i"><use href="#folders"/></svg></button></div>
  <div class="sidebody">
    <div class="sidetools">
      <button class="grip" aria-label="Active"><svg class="i"><use href="#greencube"/></svg></button>
      <button aria-label="Expand"><svg class="i"><use href="#t1"/></svg></button>
      <button aria-label="Collapse"><svg class="i"><use href="#t2"/></svg></button>
      <button aria-label="Columns"><svg class="i"><use href="#t3"/></svg></button>
      <span class="bar"></span>
      <button aria-label="Tree filters"><svg class="i"><use href="#t4"/></svg></button>
      <button aria-label="Tree columns"><svg class="i"><use href="#t5"/></svg></button>
      <span class="bar"></span>
      <button aria-label="Settings"><svg class="i"><use href="#gears"/></svg></button>
      <button aria-label="Layers"><svg class="i"><use href="#layers"/></svg></button>
      <button aria-label="Pick"><svg class="i"><use href="#t8"/></svg></button>
      <button class="last" aria-label="Save settings"><svg class="i"><use href="#setdoc"/></svg></button>
    </div>
    <div class="filter"><svg class="i"><use href="#funnel"/></svg><div class="fbox"><input type="text" aria-label="Filter tree"><svg class="i"><use href="#xthin"/></svg></div><i class="ar"></i><button aria-label="Add"><svg class="i"><use href="#plus"/></svg></button></div>
    <div class="colhead"></div>
    <ul class="tree">
      <li class="root"><svg class="i"><use href="#asm"/></svg>C11_IN_CONTEXT_DESIGN_V3B.ASM</li>
      <li class="n sub"><svg class="i"><use href="#skel"/></svg><span class="dim focus">C11_IN_CONTEXT_DESIGN_V3B_SKEL.PRT</span></li>
      <li class="n"><svg class="i"><use href="#plane16"/></svg>ASM_RIGHT</li>
      <li class="n"><svg class="i"><use href="#plane16"/></svg>ASM_TOP</li>
      <li class="n"><svg class="i"><use href="#plane16"/></svg>ASM_FRONT</li>
      <li class="n"><svg class="i"><use href="#csys"/></svg>ASM_DEF_CSYS</li>
      <li class="n sub"><svg class="i"><use href="#cube"/></svg>MAIN.PRT</li>
      <li class="n sub"><svg class="i"><use href="#cube"/></svg>SIDE_INSERT.PRT</li>
      <li class="n sub"><svg class="i"><use href="#cube"/></svg>SIDE_INSERT_MIR.PRT</li>
      <li class="n sub"><svg class="i"><use href="#cube"/></svg>BASE.PRT</li>
      <li class="n"><svg class="i"><use href="#sk1"/></svg><span class="dim">Sketch 1</span></li>
      <li class="n sub"><svg class="i"><use href="#patt16"/></svg>Pattern 1 of ACS0</li>
      <li class="n sub openn"><svg class="i"><use href="#patt16"/></svg>Pattern 2 of CLAMP.PRT</li>
      <li class="n sub deep"><svg class="i"><use href="#cube"/></svg>CLAMP.PRT</li>
      <li class="n sub deep"><svg class="i"><use href="#cube"/></svg>CLAMP.PRT</li>
      <li class="n sub deep"><svg class="i"><use href="#cube"/></svg>CLAMP.PRT</li>
      <li class="n sub deep"><svg class="i"><use href="#cube"/></svg>CLAMP.PRT</li>
    </ul>
    <div class="insert"></div>
  </div>
</aside>

<section class="canvas">
  <div class="viewbar">
    <button aria-label="Refit"><svg class="i"><use href="#zfit"/></svg></button>
    <button aria-label="Zoom in"><svg class="i"><use href="#zin"/></svg></button>
    <button aria-label="Zoom out"><svg class="i"><use href="#zout"/></svg></button>
    <button aria-label="Repaint"><svg class="i"><use href="#repaint"/></svg></button>
    <button class="cr" aria-label="Rendering"><svg class="i"><use href="#render"/></svg></button>
    <button class="cr" aria-label="Display style"><svg class="i"><use href="#dstyle16"/></svg></button>
    <button aria-label="Visibility"><svg class="i"><use href="#hidden"/></svg></button>
    <button class="cr" aria-label="Saved orientations"><svg class="i"><use href="#named"/></svg></button>
    <button aria-label="View manager"><svg class="i"><use href="#manage16"/></svg></button>
    <button aria-label="Perspective"><svg class="i"><use href="#persp"/></svg></button>
    <button class="cr" aria-label="Section display"><svg class="i"><use href="#nodisp"/></svg></button>
    <button class="cr" aria-label="Datum display"><svg class="i"><use href="#datums"/></svg></button>
    <button class="pressed" aria-label="Annotations"><svg class="i"><use href="#annot"/></svg></button>
    <button aria-label="Spin center"><svg class="i"><use href="#spin"/></svg></button>
    <button aria-label="Simulate"><svg class="i"><use href="#sim"/></svg></button>
    <button aria-label="Pause"><svg class="i"><use href="#pause"/></svg></button>
    <button aria-label="Resume"><svg class="i"><use href="#resume"/></svg></button>
  </div>

  <svg class="model" viewBox="0 0 2220 1830" role="img" aria-label="Exploded assembly">
    <defs>
      <linearGradient id="bend" gradientUnits="userSpaceOnUse" x1="460" y1="280" x2="482" y2="316"><stop offset="0" stop-color="#747b79"/><stop offset=".45" stop-color="#aab3b0"/><stop offset="1" stop-color="#d5e0dd"/></linearGradient>
      <linearGradient id="roll"><stop offset="0" stop-color="#d8e8e4"/><stop offset="1" stop-color="#7b8280"/></linearGradient>
      <linearGradient id="rollc" x1="0" y1="0" x2="1" y2="1"><stop offset=".2" stop-color="#d5e0dd"/><stop offset="1" stop-color="#868e8b"/></linearGradient>
      <linearGradient id="gold"><stop offset="0" stop-color="#7a581d"/><stop offset="1" stop-color="#c08b2d"/></linearGradient>
      <linearGradient id="grn" x1="0" y1="0" x2="0" y2="1"><stop offset="0" stop-color="#88a090"/><stop offset=".45" stop-color="#a3c6b0"/><stop offset="1" stop-color="#88a692"/></linearGradient>
      <clipPath id="backclip"><path d="M880 0H1300V204L1117 158L912 107L880 100Z"/></clipPath>
      <g id="clips">
        <path class="lt" d="M185 645Q200 635 205 625L255 600L285 598L225 640V655L205 661L185 661Z"/>
        <path class="tp" d="M225 638L285 592L335 605L272 647Z"/><path class="lt" d="M225 638L272 647V665L225 656L208 653Q222 645 225 638Z"/><path class="dk" d="M272 647L335 605V622L272 665Z"/>
        <path class="rc" d="M307 653L370 613L425 625Q440 633 455 655L382 692Q368 660 345 657Z"/>
        <path class="lt" d="M307 653L345 657Q360 662 372 685L390 690V712Q368 705 360 690Q352 678 340 679L307 672Z"/>
        <path class="ln" d="M345 657L408 622M368 672L430 632M378 690L440 645"/>
      </g>
      <g id="clamp">
        <path class="g2" d="M200 915Q230 910 290 932Q300 938 299 950L205 1008L190 1000Z"/>
        <path class="g3" d="M299 950V967L208 1028L190 1020L205 1008Z"/>
        <path class="g2" d="M125 758L195 688L315 718L215 785Q160 770 100 757Z"/>
        <path class="g3" d="M315 718V735L215 795Q197 805 197 835V1005H188V832Q190 800 215 783Z"/>
        <path fill="url(#grn)" d="M100 757L215 783Q190 795 188 835L67 805Q68 775 100 757Z"/>
        <path class="g1" d="M67 805L188 835V1005L67 975Z"/>
        <path fill="url(#grn)" d="M67 975L188 1005Q190 1020 200 1028L85 1000Q68 995 67 975Z"/>
        <path class="g3" d="M188 1005H197Q198 1012 208 1008L208 1026L200 1028Q188 1022 188 1005Z"/>
        <path class="ln" d="M125 758Q67 760 67 805V975Q68 995 85 1000L200 1028"/>
      </g>
    </defs>

    <!-- base plate -->
    <g transform="translate(270 660)">
      <path class="b1" d="M200 755L325 638L700 560L1206 600L1500 480L1600 547L1102 842Q1060 826 1035 832Q1020 838 1008 848L905 907L820 915L262 770Z"/>
      <path class="b1" d="M200 758L262 770L820 915V952L205 795Z"/>
      <path class="b2" d="M820 915L905 907V943L820 952Z"/>
      <path class="b3" d="M905 907L1012 845V873L905 943Z"/>
      <path class="b2" d="M1012 845Q1040 822 1102 842V877Q1050 855 1012 873Z"/>
      <path class="b3" d="M1102 842L1580 545L1640 520L1600 570L1102 877Z"/>
    </g>

    <!-- rear clamp -->
    <g transform="translate(1200 180)">
      <path class="g1" d="M355 490L422 445V640L340 610Q355 600 355 580Z"/>
      <path fill="url(#grn)" d="M355 578L422 596V622L345 605Z"/>
      <path class="g3" d="M345 605L422 622V640L328 614Z"/>
      <path class="g2" d="M235 455L348 381L430 401V445L355 485Z"/>
      <path class="g3" d="M235 455L355 485V500L235 472ZM355 485L422 442V460L355 500Z"/>
    </g>

    <!-- main plate -->
    <g transform="translate(270 660)">
      <path class="tp" d="M132 600L243 530V512L190 497L800 107L848 72Q880 85 920 80L960 62L985 66L912 107L1117 158L1178 119L1350 160L1400 220L1565 300L1535 335L1305 468L1205 462L1127 510L1063 560V655H1085V705L1050 722Q1000 702 957 712L850 785L768 793L735 780L690 760L640 712L553 737L525 730L390 690L330 640L260 625L185 645L150 638Z"/>
      <path class="lt" d="M132 600L150 638L185 645V661L152 655L132 620Z"/>
      <path class="lt" d="M390 690L525 730Q548 733 553 722V740Q545 750 525 748L378 708Z"/>
      <path class="lt" d="M735 780L768 793L850 785L957 712Q985 702 1015 710L1050 720Q1083 722 1083 695V655H1068V702Q1060 712 1045 707L1050 737L1015 727Q985 722 960 730L852 802L768 811L730 797Z"/>
      <use href="#clips"/><use href="#clips" transform="translate(343 88)"/>
      <g clip-path="url(#backclip)"><path fill="#e8e9ed" d="M985 60L1200 100L1117 158L975 122Z"/><use href="#clips" transform="translate(727 -538)"/></g>

      <path class="dk" d="M153 322L173 300L245 255L295 232L392 243L402 245L665 75L757 98L172 474V425H153Z"/>
      <path fill="url(#bend)" d="M172 475L757 98L802 107L190 497Z"/><path class="ln" d="M172 475L757 98M190 497L802 107"/>
      <path class="lt" d="M243 257L290 229L300 233L262 257ZM387 242L650 68L665 75L404 245Z"/>
      <path class="lt" d="M137 428V325Q138 305 155 296L215 257L232 257L173 300Q158 303 155 322V425Z"/>
      <path class="lt" d="M158 430H173V475Q178 490 195 497L230 508Q243 512 243 522L240 530L188 515Q158 505 158 470Z"/>
      <path class="tp" d="M173 298L232 257L300 270Q325 275 327 288L290 320H258Z"/>
      <path class="lt" d="M173 298L258 320V337L165 315Z"/><path class="lt" d="M258 320H290L327 288L325 308L287 335L258 337Z"/>
      <ellipse class="lt" cx="262" cy="292" rx="31" ry="13"/><ellipse fill="#747b79" cx="262" cy="297" rx="22" ry="8"/>

      <path class="hole" d="M865 378L915 345Q928 330 918 305Q930 240 1075 238L1145 197L1302 236L1262 265Q1233 280 1248 300Q1242 350 1130 370Q1085 375 1022 418Z"/>
      <path class="lt" d="M918 305Q930 240 1075 238V256Q965 255 922 320Z"/>
      <path class="dk" d="M1075 238L1145 197V215L1075 256ZM865 378L915 345L925 340L920 355L885 382Z"/>
      <path class="lt" d="M1145 197L1302 236L1290 250L1147 214Z"/>
      <path class="b3" d="M980 407Q1030 370 1128 370L1197 320L1235 328Q1210 360 1130 370Q1070 382 1022 418Z"/>
      <path class="b1" d="M1197 320L1240 328Q1225 343 1197 355Z"/>

      <path class="dk" d="M1063 560L1127 518L1210 465L1305 480L1535 335L1700 250L1420 490L1085 705V655H1063Z"/>
      <path fill="#7f8885" d="M1085 703L1420 488V498L1085 712Z"/>
      <path class="lt" d="M1127 510L1197 462L1210 465L1127 522ZM1290 476L1558 296L1570 305L1305 480Z"/>
      <path class="lt" d="M1045 555H1063V662H1045Z"/>
      <path class="rc" d="M938 488L975 459Q985 453 1010 455L1090 475Q1127 485 1127 518L1063 560Q1063 528 1030 518L943 498Z"/>
      <path class="tp" d="M938 488L975 459Q985 453 1010 455L1090 475L1030 517L943 495Z"/>
      <path class="lt" d="M938 488L945 496L1030 517Q1062 528 1063 560H1045Q1045 540 1020 533L945 515L938 505Z"/>
      <path class="ln" d="M1030 517L1088 475M1050 530L1110 485"/>
      <ellipse class="dk" cx="1000" cy="481" rx="31" ry="13"/><ellipse fill="#d5e0dd" cx="1000" cy="486" rx="23" ry="8"/>
    </g>

    <!-- rear-left upright -->
    <g>
      <path class="lt" d="M1100 155L1205 107L1222 112L1240 135V208L1214 227L1130 205L1100 208Z"/>
      <path class="dk" d="M1232 143L1242 135V208L1214 227L1232 210Z"/><path class="ln" d="M1130 155V205M1195 113L1218 118L1232 143"/>
      <ellipse class="dk" cx="1188" cy="165" rx="24" ry="30" transform="rotate(-25 1188 165)"/><ellipse fill="#f4f7f7" cx="1192" cy="163" rx="20" ry="26" transform="rotate(-25 1192 163)"/>
      <path class="lt" d="M1117 550L1125 546L1215 568L1240 590V672L1214 690L1117 667Z"/>
      <path class="dk" d="M1232 603L1242 597V670L1214 690L1232 672Z"/><path class="ln" d="M1130 555V670M1125 552L1215 575L1232 603"/>
      <ellipse class="dk" cx="1188" cy="627" rx="24" ry="30" transform="rotate(-25 1188 627)"/><ellipse fill="#f4f7f7" cx="1192" cy="625" rx="20" ry="26" transform="rotate(-25 1192 625)"/>
      <path class="dk" d="M1015 145L1035 138L1100 155V440L940 375L975 335Q1013 310 1013 260Z"/>
      <path class="lt" d="M997 150Q998 122 1030 122L1118 143V160L1030 140Q1015 140 1015 155V260Q1015 320 975 345L940 375L925 380L917 365Q920 355 935 350L970 330Q997 310 997 255Z"/>
      <path class="tp" d="M1005 125L1095 66L1110 64L1203 88L1118 143L1030 122Z"/><path class="ln" d="M1033 122L1113 68"/>
      <path class="dk" d="M1118 143L1203 88V103L1118 160Z"/>
      <path class="lt" d="M917 372L935 378V735L917 720Z"/>
      <path class="lt" d="M935 380L1070 415L1105 460V742L1072 767L935 735Z"/>
      <path class="dk" d="M1105 460L1117 457V730L1105 742Z"/>
      <path class="lt" d="M940 372L1078 406L1117 457L1105 462L1070 415L935 381Z"/>
      <ellipse class="lt" cx="1038" cy="582" rx="32" ry="40" transform="rotate(-25 1038 582)"/><ellipse class="dk" cx="1044" cy="580" rx="27" ry="36" transform="rotate(-25 1044 580)"/>
    </g>

    <!-- left side insert -->
    <g>
      <path class="o2" d="M77 692L365 395L547 275V643L322 790L225 778L200 792L150 780L77 800Z"/>
      <path class="o1" d="M60 688L348 390L530 270Q550 258 580 265L720 300L757 347V622L712 657L577 623V272L547 275L365 395L77 692V800L60 797Z"/>
      <path fill="url(#gold)" d="M547 275Q560 270 577 273V623Q560 628 547 643Z"/>
      <path class="ln" d="M547 275V643M577 273V623M577 273L718 307L749 350V625M749 350L757 347M348 390L365 395M60 688L77 692M718 307L722 300"/>
      <ellipse class="o1" cx="678" cy="473" rx="33" ry="40" transform="rotate(-25 678 473)"/><ellipse class="gap" cx="684" cy="470" rx="27" ry="36" transform="rotate(-25 684 470)"/>
      <path fill="#8a6422" d="M77 800L150 752V780L95 825Z"/>
      <path class="o1" d="M60 797H77Q80 815 95 825L150 780L240 800Q248 803 247 818L207 845L95 822V842Q62 832 60 797Z"/>
      <path class="o1" d="M95 822L180 845H207L248 812V828L205 862L180 863L92 841Q80 835 77 822Z"/><path class="ln" d="M180 845V863M207 845L205 862"/>
      <ellipse class="o1" cx="184" cy="818" rx="31" ry="13"/><path fill="#8a6422" d="M156 818Q160 807 188 807V822L165 826Z"/><ellipse fill="#e8e9ed" cx="187" cy="826" rx="18" ry="4"/>
    </g>

    <!-- right upright and insert -->
    <g transform="translate(1200 180)">
      <path class="lt" d="M682 175L706 190V225L682 200Z"/>
      <path class="dk" d="M805 130L815 145V260L805 262Z"/>
      <path class="dk" d="M720 205L809 147V680L650 775V415L690 385Q722 365 722 310Z"/>
      <path class="lt" d="M706 205H722V312Q722 368 690 388L645 418L620 424L598 416Q625 412 640 405L685 380Q706 360 706 310Z"/>
      <path class="rc" d="M688 160L775 105Q805 112 809 147L720 205Q720 170 688 160Z"/>
      <path class="tp" d="M605 140L688 83L775 105L688 160Z"/>
      <path class="lt" d="M605 140L688 160Q720 168 722 205H706Q706 185 685 178L605 157Z"/>
      <path fill="url(#roll)" d="M592 420Q625 428 650 415V768Q620 778 592 770Z"/><path class="ln" d="M650 415V768"/>
      <path class="lt" d="M422 408L465 380L600 412L640 412Q620 425 592 420V771L455 737L422 690Z"/><path class="ln" d="M455 388L592 421"/>
      <ellipse class="dk" cx="489" cy="569" rx="33" ry="40" transform="rotate(-25 489 569)"/><ellipse fill="#e8e9ed" cx="495" cy="566" rx="28" ry="36" transform="rotate(-25 495 566)"/><path class="g1" d="M472 540L485 532V590L475 580Z"/>
      <path class="o1" d="M785 500L828 463L975 500Q985 506 983 520L785 640Z"/><path class="ln" d="M815 470L960 505V525"/>
      <path class="o1" d="M490 935L785 633L965 518H983L795 643L507 940V1045L490 1030Z"/>
      <path class="o2" d="M507 940L797 643L978 520V888L752 1037L655 1022L580 1068L578 1000L507 1045Z"/>
      <path class="o1" d="M978 518L984 512V880L978 890Z"/><path class="o1" d="M565 1005L578 997L580 1070L565 1065Z"/>
      <path class="o1" d="M382 1018L410 996Q425 990 445 993L490 1003V1035L507 1045V1055Q500 1078 475 1075L382 1052Z"/>
      <path class="ln" d="M382 1030L385 1036L472 1058Q490 1055 490 1035M472 1058V1075"/>
      <ellipse class="o2" cx="444" cy="1020" rx="31" ry="13"/><ellipse fill="#777" cx="444" cy="1024" rx="23" ry="8"/>
    </g>

    <!-- front clamps -->
    <g transform="translate(270 660)"><use href="#clamp"/><use href="#clamp" transform="translate(315 98)"/></g>
  </svg>
  <p class="state">Explode State:DEFAULT EXPLODE(+)</p>
</section>
</main>

<footer class="status">
  <button class="pressed" aria-label="Navigator"><svg class="i"><use href="#navtree"/></svg></button>
  <button aria-label="Browser"><svg class="i"><use href="#globe"/></svg></button>
  <button aria-label="Full screen"><svg class="i"><use href="#sheet"/></svg></button>
  <p class="msg">Assembly components have been successfully exploded.</p>
  <div class="right">
    <button aria-label="Find"><svg class="i"><use href="#bino"/></svg></button><i class="ar"></i>
    <button aria-label="Box select"><svg class="i"><use href="#dashsel"/></svg></button><i class="ar"></i>
    <button aria-label="Pick"><svg class="i"><use href="#picksel"/></svg></button>
    <button class="geo" aria-label="Geometry display"><svg><use href="#geo"/></svg></button>
    <div class="pick"><select aria-label="Selection filter"><option>Geometry</option></select><i class="ar"></i></div>
  </div>
</footer>
<p class="subtitle">Please refer to other What's New videos for more details on the individual capabilities.</p>
</div>
</body>
</html>
```
FILE: styles.css
```css
* { box-sizing: border-box; }
body { margin: 0; font-family: "Noto Sans", sans-serif; font-size: 11px; color: #35393c; }
button { border: 0; padding: 0; background: none; font: inherit; color: inherit; }
h1, p, ul { margin: 0; padding: 0; font-weight: 400; list-style: none; }
svg { display: block; flex: none; }
.defs { position: absolute; width: 0; height: 0; }
.i { width: 16px; height: 16px; }
.app { position: relative; display: flex; flex-direction: column; min-height: 100vh; }
.ar { display: inline-block; flex: none; border: 4px solid transparent; border-top-color: #5b6063; border-bottom: 0; }

.titlebar { position: relative; display: flex; align-items: center; justify-content: space-between; height: 28px; padding: 0 9px 0 8px; background: #dbdfdf; }
.brand { display: flex; align-items: center; gap: 4px; width: 80px; font: 500 17px/20px Inter, sans-serif; color: #5a5f61; }
.quick { display: flex; align-items: center; flex: 1; }
.quick button { display: flex; align-items: center; width: 24px; height: 24px; }
.quick .dd { width: 38px; }
.quick .dd::after, .quick .more::after { content: ""; margin-left: 6px; border: 4px solid transparent; border-top-color: #5b6063; border-bottom: 0; }
.quick .off::after { border-top-color: #a6aaab; }
.quick .more { width: 20px; border-left: 1px solid #b5b9ba; padding-left: 2px; }
.titlebar h1 { position: absolute; left: 0; right: 0; text-align: center; font-size: 13px; line-height: 28px; pointer-events: none; }
.winbtns { display: flex; gap: 11px; }

.tabs { display: flex; height: 27px; background: #3f454a; color: #f4f6f6; font-size: 12px; }
.tabs > button { padding: 0 24px; }
.tabs .file { padding: 0 20px; background: linear-gradient(#5fcf45, #4cab34); }
.tabs .on { background: #f8f9fb; color: #3a7d2a; }
.find { display: flex; align-items: center; margin-left: auto; }
.fold { width: 10px; height: 6px; margin: 0 8px 6px 0; border: 5px solid transparent; border-bottom-color: #fff; border-top: 0; }
.findbox { display: flex; align-items: center; width: 232px; height: 24px; padding: 0 2px; background: #fff; border: 1px solid #aab0b2; }
.findbox input, .fbox input { flex: 1; min-width: 0; border: 0; outline: 0; background: none; }
.go { display: grid; place-items: center; width: 24px; height: 25px; margin-left: 2px; background: #dbdde0; border: 1px solid #aab0b2; }
.help { width: 24px; font-weight: 700; font-size: 13px; }

.ribbon { display: flex; height: 106px; background: #f8f9fb; }
.group { position: relative; display: flex; flex-direction: column; align-items: center; flex: none; padding-top: 2px; }
.group::after { content: ""; position: absolute; right: 0; top: 2px; bottom: 2px; width: 1px; background: #b3b6b9; }
.w-ops { width: 149px; } .w-get { width: 146px; } .w-comp { width: 278px; } .w-datum { width: 218px; } .w-cut { width: 96px; }
.w-mod { width: 72px; } .w-disp { width: 400px; } .w-int { width: 310px; } .w-inv { width: 123px; }
.tools { display: flex; height: 80px; align-items: flex-start; }
.big { display: flex; flex-direction: column; align-items: center; padding: 4px 5px 0; text-align: center; line-height: 15px; }
.big svg { width: 32px; height: 32px; margin-bottom: 9px; }
.big > .ar { margin-top: 4px; }
.ar.in { margin-left: 3px; vertical-align: 3px; }
.col { display: flex; flex-direction: column; align-items: flex-start; gap: 2px; }
.sm { display: flex; align-items: center; gap: 4px; height: 24px; padding: 0 3px; white-space: nowrap; border: 1px solid transparent; }
.sm .ar { margin: 0 3px; }
.off { color: #a9acae; }
.off .ar { border-top-color: #a9acae; }
.pressed { background: #dcdee1; border: 1px solid #b0b2b5; }
.vsep { width: 1px; height: 79px; margin: 0 4px; background: #b3b6b9; }
.cap { display: flex; align-items: center; gap: 3px; height: 24px; }

.work { display: flex; flex: 1; border-top: 1px solid #a9bbbb; }
.side { display: flex; flex-direction: column; width: 353px; border-right: 3px solid #dbdfe3; background: #f8fbfa; }
.sidetabs { display: flex; height: 26px; margin-right: -3px; background: #dbdfdf; }
.sidetabs button { width: 32px; padding-left: 10px; }
.sidetabs button + button { padding-left: 7px; }
.sidetabs .on { background: #f8fbfa; }
.sidebody { display: flex; flex-direction: column; padding: 0 5px 0 8px; }
.sidetools { display: flex; align-items: center; gap: 8px; height: 32px; padding-left: 2px; }
.grip { padding-right: 6px; margin-right: 12px; border-right: 2px dotted #aaa; }
.bar { width: 1px; height: 24px; background: #b5b9ba; }
.sidetools .last { margin-left: auto; margin-right: 3px; }
.filter { display: flex; align-items: center; height: 27px; padding-left: 4px; }
.fbox { display: flex; align-items: center; width: 270px; height: 27px; margin: 0 5px 0 4px; padding-right: 1px; background: #fff; border: 1px solid #9fa5a8; }
.filter button { margin-left: 9px; }
.colhead { height: 21px; margin-top: 4px; border: 1px solid #cfd2d3; border-top: 0; border-left: 0; background: #fafbfb; }
.tree li { display: flex; align-items: center; gap: 4px; height: 18px; padding-left: 4px; white-space: nowrap; }
.root .i { margin-left: -1px; margin-right: 1px; }
.tree .n { position: relative; padding-left: 23px; gap: 5px; }
.tree .deep { padding-left: 43px; }
.n::before { content: ""; position: absolute; left: 11px; top: 0; width: 8px; height: 18px; border-left: 1px solid #c6c9ca; background: linear-gradient(#c6c9ca, #c6c9ca) 0 9px / 8px 1px no-repeat; }
.sub::before { background: none; }
.deep::before { left: 31px; }
.sub::after { content: ""; position: absolute; left: 9px; top: 4px; border: 5px solid transparent; border-left-color: #5b6063; border-right: 0; }
.deep::after { left: 29px; }
.openn::before { height: 7px; }
.openn::after { left: 7px; top: 7px; border: 4px solid transparent; border-top-color: #5b6063; border-bottom: 0; }
.dim { color: #c2b8a6; }
.focus { outline: 1px dotted #333; line-height: 15px; }
.insert { height: 5px; margin: 5px 0 0 3px; border: solid #6bbf59; border-width: 0 2px; background: linear-gradient(#6bbf59, #6bbf59) 0 2px / 100% 2px no-repeat; }

.canvas { position: relative; flex: 1; background: #e8e9ed; }
.viewbar { position: absolute; left: 559px; top: 7px; display: flex; align-items: center; height: 32px; padding: 0 2px; background: #f8f9fb; border: 1px solid #a5a8ab; }
.viewbar button { position: relative; display: grid; place-items: center; width: 26px; height: 23px; }
.cr::after { content: ""; position: absolute; right: 2px; bottom: 1px; border: 2px solid #555; border-top-color: transparent; border-left-color: transparent; }
.model { position: absolute; left: 287px; top: 88px; width: 740px; height: 610px; }
.model path, .model ellipse { stroke-linejoin: round; }
.tp, .lt, .dk, .rc, .ln, .hole, .gap, .b1, .b2, .b3, .o1, .o2, .g1, .g2, .g3 { stroke: #1c1f1e; stroke-width: 2; }
.tp { fill: #d5e0dd; } .lt { fill: #d8e8e4; } .dk { fill: #747b79; } .rc { fill: url(#rollc); } .ln { fill: none; } .gap { fill: #f1f2f5; }
.hole, .b1 { fill: #706f70; } .b2 { fill: #5d5c5d; } .b3 { fill: #444344; }
.o1 { fill: #c08b2d; } .o2 { fill: #644917; }
.g1 { fill: #88a692; } .g2 { fill: #8aa08f; } .g3 { fill: #5b6d61; }
.state { position: absolute; left: 7px; bottom: 106px; font: 11px/15px "Liberation Sans", sans-serif; color: #8d8f98; }

.status { display: flex; align-items: center; height: 38px; padding: 0 18px 0 6px; border-top: 1px solid #a9bbbb; background: #f8fbfa; }
.status > button { display: grid; place-items: center; width: 22px; height: 24px; margin: 5px 4px 0 0; }
.msg { align-self: stretch; margin: 9px 0 0 5px; padding-left: 16px; border-left: 1px solid #b5b9ba; font-size: 11px; line-height: 14px; position: relative; }
.msg::before { content: ""; position: absolute; left: 6px; top: 4px; width: 5px; height: 5px; border-radius: 50%; background: #1c6485; }
.right { display: flex; align-items: center; gap: 7px; margin-left: auto; }
.right .geo { display: grid; place-items: center; width: 40px; height: 28px; border: 1px solid #aeb1b3; }
.geo svg { width: 18px; height: 18px; }
.pick { position: relative; width: 165px; margin-left: 83px; }
.pick select { appearance: none; display: block; width: 100%; height: 22px; padding: 0 7px; border: 1px solid #aeb1b3; border-radius: 0; background: linear-gradient(#aeb1b3, #aeb1b3) 148px 0 / 1px 100% no-repeat #f8fbfa; font: inherit; color: inherit; }
.pick .ar { position: absolute; right: 4px; top: 9px; }
.subtitle { position: absolute; left: 50%; bottom: 4px; transform: translateX(-50%); height: 55px; padding: 0 16px; border-radius: 8px; background: rgba(0, 0, 0, .75); color: #fff; font: 33px/55px Lato, sans-serif; white-space: nowrap; }
```
